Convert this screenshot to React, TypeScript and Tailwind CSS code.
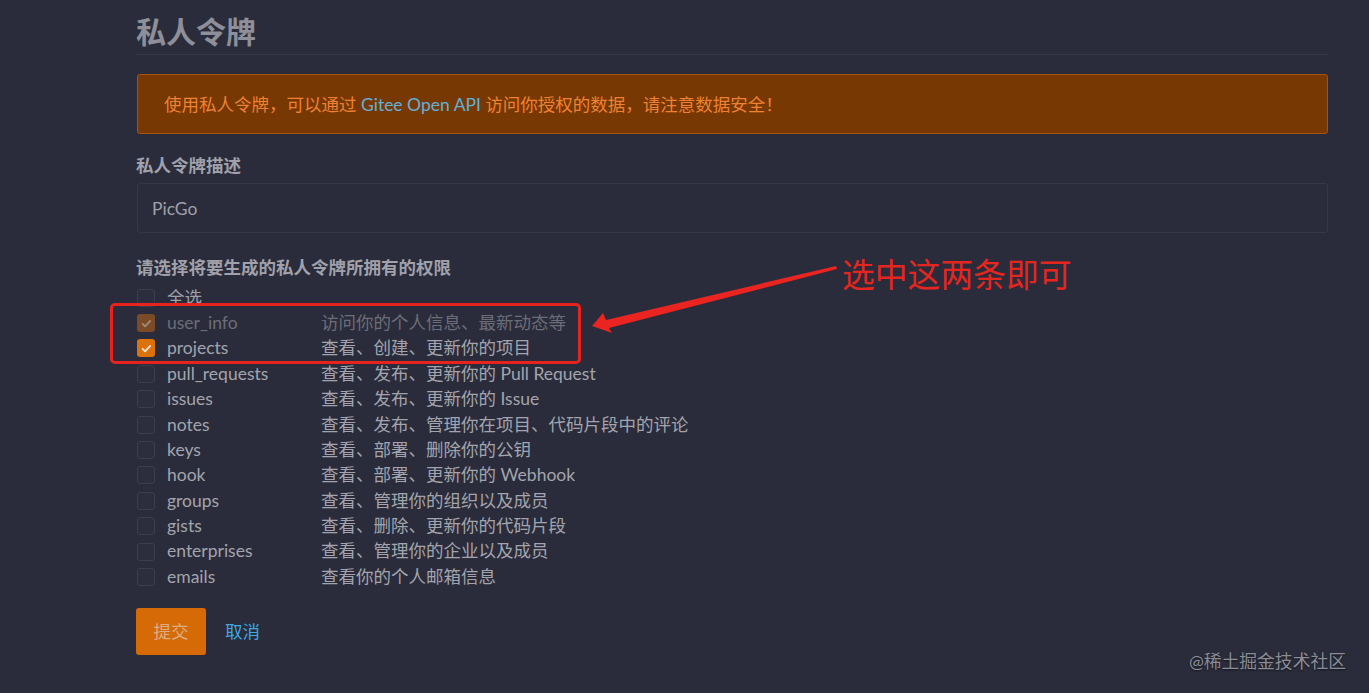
const scopes = [
  { name: "user_info", desc: "访问你的个人信息、最新动态等", state: "locked" },
  { name: "projects", desc: "查看、创建、更新你的项目", state: "checked" },
  { name: "pull_requests", desc: "查看、发布、更新你的 Pull Request", state: "" },
  { name: "issues", desc: "查看、发布、更新你的 Issue", state: "" },
  { name: "notes", desc: "查看、发布、管理你在项目、代码片段中的评论", state: "" },
  { name: "keys", desc: "查看、部署、删除你的公钥", state: "" },
  { name: "hook", desc: "查看、部署、更新你的 Webhook", state: "" },
  { name: "groups", desc: "查看、管理你的组织以及成员", state: "" },
  { name: "gists", desc: "查看、删除、更新你的代码片段", state: "" },
  { name: "enterprises", desc: "查看、管理你的企业以及成员", state: "" },
  { name: "emails", desc: "查看你的个人邮箱信息", state: "" },
];

function Box({ state }: { state: string }) {
  if (state === "checked" || state === "locked") {
    const locked = state === "locked";
    return (
      <div
        className={`flex size-[18px] items-center justify-center rounded-[3px] ${
          locked ? "bg-[#7a4b26]" : "bg-[#dc720c]"
        }`}
      >
        <svg viewBox="0 0 16 16" className="size-[13px]" fill="none">
          <path
            d="M3.2 8.4l3 3 6.4-6.6"
            stroke={locked ? "#a28b78" : "#f3e6d8"}
            strokeWidth={2.2}
            strokeLinecap="round"
            strokeLinejoin="round"
          />
        </svg>
      </div>
    );
  }
  return <div className="size-[18px] rounded-[3px] border border-[#3c3e4d] bg-[#2c2e3d]" />;
}

export default function App() {
  return (
    <div
      className="relative min-h-[693px] w-full overflow-hidden bg-[#2a2c3b] text-[17.5px]"
      style={{ fontFamily: '"Lato", "Noto Sans CJK SC", sans-serif' }}
    >
      <div className="ml-[136px] w-[1192px] pt-[12px]">
        <h1 className="border-b border-[#353746] pb-[4px] text-[30px] font-bold leading-[38px] text-[#8e8f99]">
          私人令牌
        </h1>

        <div className="ml-px mt-[19px] flex h-[60px] items-center rounded-[3px] border border-[#a9520f] bg-[#783804] pl-[26px] pt-[2px] text-[#ef8232]">
          使用私人令牌，可以通过&nbsp;<span className="text-[#62b0da]">Gitee Open API</span>&nbsp;访问你授权的数据，请注意数据安全！
        </div>

        <div className="mt-[20px] font-bold leading-[24px] text-[#a0a1aa]">私人令牌描述</div>
        <div className="ml-px mt-[5px] flex h-[50px] items-center rounded-[3px] border border-[#363848] px-[14px] pt-[3px] text-[#a0a1aa]">
          PicGo
        </div>

        <div className="mt-[23px] font-bold leading-[24px] text-[#a0a1aa]">
          请选择将要生成的私人令牌所拥有的权限
        </div>

        <div className="mt-[5px] ml-px">
          <div className="flex h-[25.4px] items-center">
            <Box state="" />
            <span className="ml-[12px] text-[#9fa0a9]">全选</span>
          </div>
          {scopes.map((s) => (
            <div key={s.name} className="flex h-[25.4px] items-center">
              <Box state={s.state} />
              <span
                className={`ml-[12px] w-[154px] ${
                  s.state === "locked" ? "text-[#6c6d78]" : "text-[#a3a4ad]"
                }`}
              >
                {s.name}
              </span>
              <span className={s.state === "locked" ? "text-[#6c6d78]" : "text-[#a3a4ad]"}>
                {s.desc}
              </span>
            </div>
          ))}
        </div>

        <div className="mt-[18px] flex items-center gap-[19px]">
          <button className="h-[47px] w-[70px] rounded-[3px] bg-[#d56a06] pt-[2px] text-[#dcae84]">提交</button>
          <span className="pt-[2px] text-[#3ea8e0]">取消</span>
        </div>
      </div>

      {/* annotation overlay */}
      <div className="absolute left-[110px] top-[303px] h-[61px] w-[471px] rounded-[5px] border-[3px] border-[#e8231e]" />
      <svg className="absolute left-0 top-0" width="1369" height="693" viewBox="0 0 1369 693">
        <polygon
          points="836,266 837,269 609,328 612,333 592,326 603,313 606,320"
          fill="#ea2420"
        />
      </svg>
      <div className="absolute left-[842px] top-[255px] text-[32.8px] leading-[40px] text-[#e5261f]">
        选中这两条即可
      </div>

      <div className="absolute right-[23px] top-[649px] text-[17.8px] leading-[24px] text-[#8b8c96] [text-shadow:0_1px_2px_rgba(0,0,0,0.6)]">
        @稀土掘金技术社区
      </div>
    </div>
  );
}
